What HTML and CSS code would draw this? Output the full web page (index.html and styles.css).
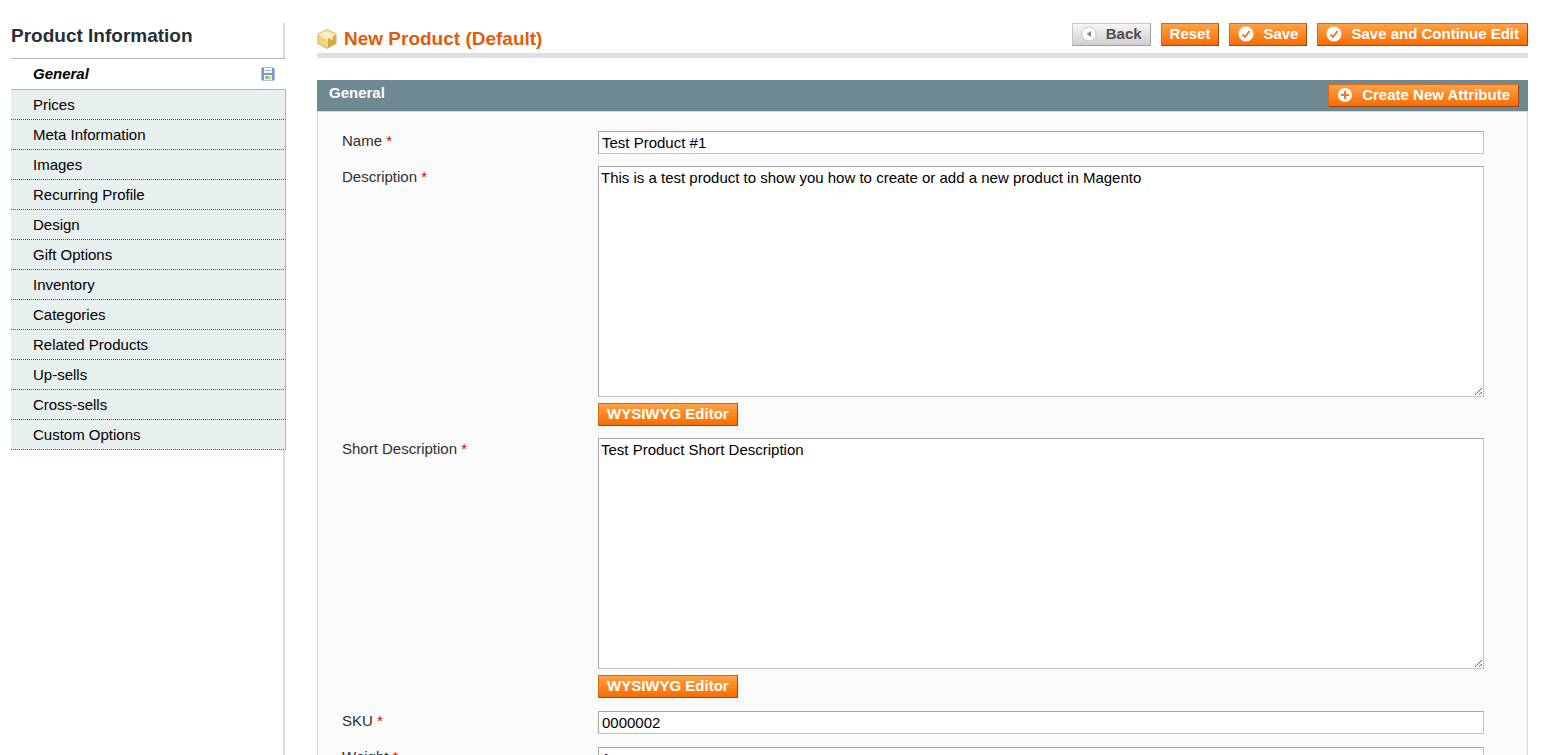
FILE: index.html
```
<!DOCTYPE html>
<html lang="en">
<head>
    <meta charset="UTF-8">
    <meta name="viewport" content="width=device-width, initial-scale=1.0">
    <title>New Product (Default)</title>
    <link rel="stylesheet" href="styles.css">
</head>
<body>

    <div class="page">
        <aside class="side-col">
            <h3>Product Information</h3>
            <ul class="tabs">
                <li><a href="#general" class="tab-item active">General
                    <svg class="icon-save" viewBox="0 0 14 14" width="14" height="14" aria-hidden="true">
                        <path d="M1 1h11l1 1v11H1z" fill="#7b9ddd" stroke="#5f86cb"/>
                        <rect x="3" y="1" width="8" height="5" fill="#f3f7fd"/>
                        <rect x="4" y="3" width="6" height="1" fill="#9db7e3"/>
                        <rect x="3" y="8" width="8" height="5" fill="#f6faf2"/>
                        <rect x="4" y="9" width="6" height="3" fill="#b9dc8f"/>
                        <rect x="5" y="9" width="2" height="3" fill="#7fae74"/>
                    </svg>
                </a></li>
                <li><a href="#prices" class="tab-item">Prices</a></li>
                <li><a href="#meta" class="tab-item">Meta Information</a></li>
                <li><a href="#images" class="tab-item">Images</a></li>
                <li><a href="#recurring" class="tab-item">Recurring Profile</a></li>
                <li><a href="#design" class="tab-item">Design</a></li>
                <li><a href="#gift" class="tab-item">Gift Options</a></li>
                <li><a href="#inventory" class="tab-item">Inventory</a></li>
                <li><a href="#categories" class="tab-item">Categories</a></li>
                <li><a href="#related" class="tab-item">Related Products</a></li>
                <li><a href="#upsell" class="tab-item">Up-sells</a></li>
                <li><a href="#crosssell" class="tab-item">Cross-sells</a></li>
                <li><a href="#custom" class="tab-item">Custom Options</a></li>
            </ul>
        </aside>

        <main class="main-col">
            <div class="content-header">
                <h2>
                    <svg viewBox="0 0 20 20" width="20" height="20" aria-hidden="true">
                        <path d="M10 .7 19 5v9.500L10 19.300 1 14.500V5z" fill="#e9bc55" stroke="#c9a45a"/>
                        <path d="M10 1.200 18.500 5 10 9.500 1.500 5z" fill="#fbe9b4"/>
                        <path d="M1.500 5.500 10 10v8.500l-8.500-4.300z" fill="#f3d27f"/>
                        <path d="M10 10l8.500-4.500v8.700L10 18.500z" fill="#dda63a"/>
                        <path d="M5 3.500 13.500 8v3.500l2-1V7L7 2.500z" fill="#fff6dc"/>
                        <path d="M1.500 5.500 10 10l8.500-4.500M10 10v8.500" fill="none" stroke="#fff3cf"/>
                    </svg>
                    New Product (Default)
                </h2>
                <div class="form-buttons">
                    <button type="button" class="btn back">
                        <svg viewBox="0 0 16 16" width="16" height="16" aria-hidden="true">
                            <circle cx="8" cy="8" r="7" fill="#fff" stroke="#c9c9c9"/>
                            <path d="M10 5v6L5.500 8z" fill="#8a8a8a"/>
                        </svg>
                        Back
                    </button>
                    <button type="button" class="btn">Reset</button>
                    <button type="button" class="btn">
                        <svg viewBox="0 0 16 16" width="16" height="16" aria-hidden="true">
                            <circle cx="8" cy="8" r="7.500" fill="#fff"/>
                            <path d="M4.500 8.500 7 11l4.500-6" fill="none" stroke="#f47a1c" stroke-width="2"/>
                        </svg>
                        Save
                    </button>
                    <button type="button" class="btn">
                        <svg viewBox="0 0 16 16" width="16" height="16" aria-hidden="true">
                            <circle cx="8" cy="8" r="7.500" fill="#fff"/>
                            <path d="M4.500 8.500 7 11l4.500-6" fill="none" stroke="#f47a1c" stroke-width="2"/>
                        </svg>
                        Save and Continue Edit
                    </button>
                </div>
            </div>

            <div class="entry-head">
                <h4>General</h4>
                <button type="button" class="btn">
                    <svg viewBox="0 0 16 16" width="16" height="16" aria-hidden="true">
                        <circle cx="8" cy="8" r="7" fill="#fff"/>
                        <path d="M8 4v8M4 8h8" fill="none" stroke="#f47a1c" stroke-width="2"/>
                    </svg>
                    Create New Attribute
                </button>
            </div>
            <form class="fieldset">
                <div class="field">
                    <label for="name">Name <span class="required">*</span></label>
                    <div class="value">
                        <input type="text" id="name" value="Test Product #1">
                    </div>
                </div>
                <div class="field">
                    <label for="description">Description <span class="required">*</span></label>
                    <div class="value">
                        <textarea id="description">This is a test product to show you how to create or add a new product in Magento</textarea>
                        <button type="button" class="btn">WYSIWYG Editor</button>
                    </div>
                </div>
                <div class="field">
                    <label for="short_description">Short Description <span class="required">*</span></label>
                    <div class="value">
                        <textarea id="short_description">Test Product Short Description</textarea>
                        <button type="button" class="btn">WYSIWYG Editor</button>
                    </div>
                </div>
                <div class="field">
                    <label for="sku">SKU <span class="required">*</span></label>
                    <div class="value">
                        <input type="text" id="sku" value="0000002">
                    </div>
                </div>
                <div class="field">
                    <label for="weight">Weight <span class="required">*</span></label>
                    <div class="value">
                        <input type="text" id="weight" value="1">
                    </div>
                </div>
            </form>
        </main>
    </div>

</body>
</html>
```
FILE: styles.css
```
* {
    box-sizing: border-box;
}

body {
    margin: 0;
    background: #fff;
    color: #2f2f2f;
    font-family: "Liberation Sans", Arial, Helvetica, sans-serif;
    font-size: 15px;
    line-height: 20px;
}

h2, h3, h4, ul {
    margin: 0;
    padding: 0;
}

.page {
    display: flex;
    min-height: 100vh;
    padding: 23px 22px 0 11px;
}

/* left tabs */
.side-col {
    flex: 0 0 274px;
    border-right: 2px solid #dcdcdc;
}

.side-col h3 {
    height: 35px;
    font-size: 19px;
    line-height: 26px;
    color: #253033;
}

.tabs {
    list-style: none;
    margin-right: -3px;
}

.tab-item {
    display: flex;
    align-items: center;
    justify-content: space-between;
    height: 30px;
    padding: 0 10px 0 22px;
    border-right: 1px solid #a9b5b5;
    border-bottom: 1px dotted #4f5b5b;
    background: #e7efef;
    color: #000;
    text-decoration: none;
}

.tab-item.active {
    height: 32px;
    border-top: 1px solid #b4bcbc;
    border-bottom: 1px solid #a9b5b5;
    border-right-color: #fff;
    background: #fff;
    font-weight: bold;
    font-style: italic;
}

/* page title */
.main-col {
    flex: 1;
    margin-left: 32px;
}

.content-header {
    display: flex;
    justify-content: space-between;
    height: 35px;
    margin-bottom: 22px;
    border-bottom: 5px solid #dfdfdf;
}

.content-header h2 {
    display: flex;
    align-items: center;
    gap: 7px;
    height: 31px;
    font-size: 19px;
    color: #e35b09;
}

.form-buttons {
    display: flex;
    align-items: flex-start;
    gap: 10px;
}

.btn {
    display: flex;
    align-items: center;
    gap: 9px;
    height: 23px;
    padding: 0 8px 2px;
    border: 1px solid;
    border-color: #d9691a #a3460e #a3460e #d9691a;
    background: linear-gradient(#ffa245, #fc8a26 45%, #f66c04);
    color: #fff;
    font-family: inherit;
    font-size: 15px;
    font-weight: bold;
    line-height: 20px;
    white-space: nowrap;
    cursor: pointer;
}

.btn svg {
    margin-top: 1px;
}

.btn.back {
    border-color: #c8c8c8 #a0a0a0 #a0a0a0 #c8c8c8;
    background: linear-gradient(#f6f6f6, #cfcfcf);
    color: #4f4f4f;
}

/* form */
.entry-head {
    display: flex;
    justify-content: space-between;
    height: 31px;
    padding: 4px 9px 0 12px;
    background: #6f8992;
}

.entry-head h4 {
    font-size: 15px;
    line-height: 18px;
    color: #fff;
}

.fieldset {
    display: flex;
    flex-direction: column;
    gap: 12px;
    padding: 18px 43px 24px 24px;
    border: 1px solid #d6d6d6;
    background: #fafafa;
}

.field {
    display: flex;
}

.field label {
    flex: 0 0 256px;
    padding-top: 1px;
}

.required {
    color: #d40707;
}

.value {
    flex: 1;
}

.value input,
.value textarea {
    display: block;
    width: 100%;
    border: 1px solid;
    border-color: #a6a6a6 #c4c4c4 #c4c4c4 #a6a6a6;
    border-radius: 0;
    background: #fff;
    color: #000;
    font-family: inherit;
    font-size: 15px;
}

.value input {
    height: 23px;
    margin-top: 1px;
    padding: 0 3px;
}

.value textarea {
    height: 231px;
    margin-bottom: 6px;
    padding: 2px;
    line-height: 18px;
    resize: both;
}
```
